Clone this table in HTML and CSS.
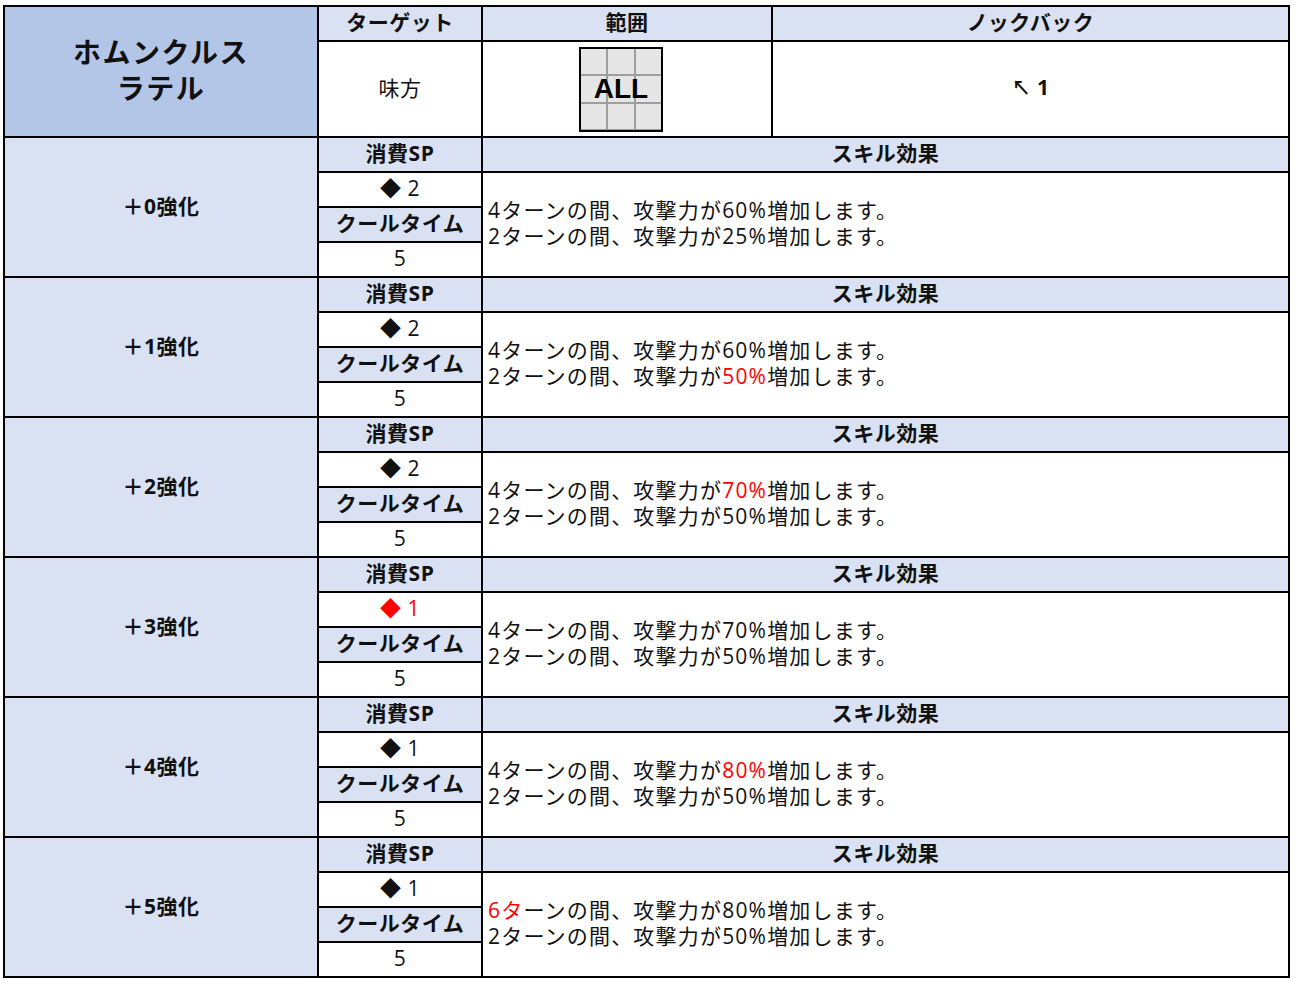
FILE: index.html
```html
<!DOCTYPE html>
<html lang="ja">
<head>
<meta charset="utf-8">
<title>ホムンクルス ラテル</title>
<link rel="stylesheet" href="styles.css">
</head>
<body>
<table class="skill">
  <colgroup>
    <col class="c1"><col class="c2"><col class="c3"><col class="c4">
  </colgroup>
  <tr class="r-head">
    <th class="title" rowspan="2">ホムンクルス<br>ラテル</th>
    <th class="lbl">ターゲット</th>
    <th class="lbl">範囲</th>
    <th class="lbl">ノックバック</th>
  </tr>
  <tr class="r-info">
    <td class="val">味方</td>
    <td class="val">
      <div class="range">
        <span class="cell"></span><span class="cell"></span><span class="cell"></span>
        <span class="cell"></span><span class="cell"></span><span class="cell"></span>
        <span class="cell"></span><span class="cell"></span><span class="cell"></span>
        <span class="all">ALL</span>
      </div>
    </td>
    <td class="val kb"><span class="arrow">↖</span> 1</td>
  </tr>

  <tr class="r">
    <th class="lv" rowspan="4">＋0強化</th>
    <th class="lbl">消費SP</th>
    <th class="lbl" colspan="2">スキル効果</th>
  </tr>
  <tr class="r"><td class="val">◆ 2</td><td class="eff" colspan="2" rowspan="3">4ターンの間、攻撃力が60%増加します。<br>2ターンの間、攻撃力が25%増加します。</td></tr>
  <tr class="r"><th class="lbl">クールタイム</th></tr>
  <tr class="r"><td class="val">5</td></tr>

  <tr class="r">
    <th class="lv" rowspan="4">＋1強化</th>
    <th class="lbl">消費SP</th>
    <th class="lbl" colspan="2">スキル効果</th>
  </tr>
  <tr class="r"><td class="val">◆ 2</td><td class="eff" colspan="2" rowspan="3">4ターンの間、攻撃力が60%増加します。<br>2ターンの間、攻撃力が<span class="up">50%</span>増加します。</td></tr>
  <tr class="r"><th class="lbl">クールタイム</th></tr>
  <tr class="r"><td class="val">5</td></tr>

  <tr class="r">
    <th class="lv" rowspan="4">＋2強化</th>
    <th class="lbl">消費SP</th>
    <th class="lbl" colspan="2">スキル効果</th>
  </tr>
  <tr class="r"><td class="val">◆ 2</td><td class="eff" colspan="2" rowspan="3">4ターンの間、攻撃力が<span class="up">70%</span>増加します。<br>2ターンの間、攻撃力が50%増加します。</td></tr>
  <tr class="r"><th class="lbl">クールタイム</th></tr>
  <tr class="r"><td class="val">5</td></tr>

  <tr class="r">
    <th class="lv" rowspan="4">＋3強化</th>
    <th class="lbl">消費SP</th>
    <th class="lbl" colspan="2">スキル効果</th>
  </tr>
  <tr class="r"><td class="val up">◆ 1</td><td class="eff" colspan="2" rowspan="3">4ターンの間、攻撃力が70%増加します。<br>2ターンの間、攻撃力が50%増加します。</td></tr>
  <tr class="r"><th class="lbl">クールタイム</th></tr>
  <tr class="r"><td class="val">5</td></tr>

  <tr class="r">
    <th class="lv" rowspan="4">＋4強化</th>
    <th class="lbl">消費SP</th>
    <th class="lbl" colspan="2">スキル効果</th>
  </tr>
  <tr class="r"><td class="val">◆ 1</td><td class="eff" colspan="2" rowspan="3">4ターンの間、攻撃力が<span class="up">80%</span>増加します。<br>2ターンの間、攻撃力が50%増加します。</td></tr>
  <tr class="r"><th class="lbl">クールタイム</th></tr>
  <tr class="r"><td class="val">5</td></tr>

  <tr class="r">
    <th class="lv" rowspan="4">＋5強化</th>
    <th class="lbl">消費SP</th>
    <th class="lbl" colspan="2">スキル効果</th>
  </tr>
  <tr class="r"><td class="val">◆ 1</td><td class="eff" colspan="2" rowspan="3"><span class="up">6タ</span>ーンの間、攻撃力が80%増加します。<br>2ターンの間、攻撃力が50%増加します。</td></tr>
  <tr class="r"><th class="lbl">クールタイム</th></tr>
  <tr class="r"><td class="val">5</td></tr>
</table>
</body>
</html>
```

FILE: styles.css
```css
html, body {
  margin: 0;
  padding: 0;
  background: #ffffff;
}
body {
  padding: 5px 0 0 3px;
  font-family: "Open Sans", "Noto Sans CJK JP", sans-serif;
  color: #111111;
}
.skill {
  border-collapse: collapse;
  table-layout: fixed;
  width: 1285px;
  font-size: 21px;
  letter-spacing: 0.5px;
}
.c1 { width: 314px; }
.c2 { width: 164px; }
.c3 { width: 290px; }
.c4 { width: 517px; }
.skill th, .skill td {
  border: 2px solid #000000;
  padding: 0 0 3px 0;
  text-align: center;
  vertical-align: middle;
  line-height: 26px;
}
.skill th { font-weight: 700; }
.r-head { height: 35px; }
.r-info { height: 96px; }
.r { height: 35px; }
.skill .title {
  background: #b4c6e7;
  font-size: 28px;
  line-height: 36px;
  letter-spacing: 1.5px;
  padding-bottom: 3px;
}
.skill .lbl { background: #d9e1f2; }
.skill .lv { background: #d9e1f2; }
.skill .val { background: #ffffff; font-weight: 400; }
.skill .eff {
  background: #ffffff;
  text-align: left;
  padding: 0 0 3px 5px;
  letter-spacing: 1.2px;
  white-space: nowrap;
}
.skill .up { color: #ff0000; }
.skill .kb { font-weight: 700; }
.arrow { font-size: 19px; }
.range {
  position: relative;
  width: 80px;
  height: 81px;
  margin-left: 96px;
  margin-top: 3px;
  border: 2px solid #000000;
  display: grid;
  grid-template-columns: repeat(3, 1fr);
  grid-template-rows: repeat(3, 1fr);
  gap: 2px;
  background: #9e9e9e;
}
.cell { background: #e6e6e6; }
.all {
  position: absolute;
  left: 0;
  right: 0;
  top: 24px;
  text-align: center;
  font-family: "Liberation Sans", sans-serif;
  font-weight: 700;
  font-size: 28px;
  line-height: 32px;
  letter-spacing: 0;
  color: #000000;
}
```
